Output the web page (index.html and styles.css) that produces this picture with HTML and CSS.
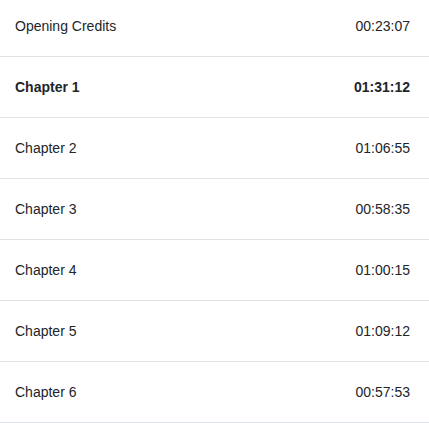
FILE: index.html
```html
<!DOCTYPE html>
<html>
<head>
<meta charset="utf-8">
<link rel="stylesheet" href="styles.css">
</head>
<body>
<ul class="list">
  <li class="row"><span>Opening Credits</span><span>00:23:07</span></li>
  <li class="row active"><span>Chapter 1</span><span>01:31:12</span></li>
  <li class="row"><span>Chapter 2</span><span>01:06:55</span></li>
  <li class="row"><span>Chapter 3</span><span>00:58:35</span></li>
  <li class="row"><span>Chapter 4</span><span>01:00:15</span></li>
  <li class="row"><span>Chapter 5</span><span>01:09:12</span></li>
  <li class="row"><span>Chapter 6</span><span>00:57:53</span></li>
</ul>
</body>
</html>
```
FILE: styles.css
```css
html, body {
  margin: 0;
  padding: 0;
  background: #fff;
}
body {
  font-family: "Liberation Sans", Arial, sans-serif;
  font-size: 14px;
  color: #212529;
  overflow: hidden;
}
.list {
  list-style: none;
  margin: -4px 0 0 0;
  padding: 0;
}
.row {
  display: flex;
  justify-content: space-between;
  align-items: center;
  height: 60px;
  padding: 0 19px 0 15px;
  border-bottom: 1px solid #dee2e6;
}
.row.active {
  font-weight: bold;
}
```
